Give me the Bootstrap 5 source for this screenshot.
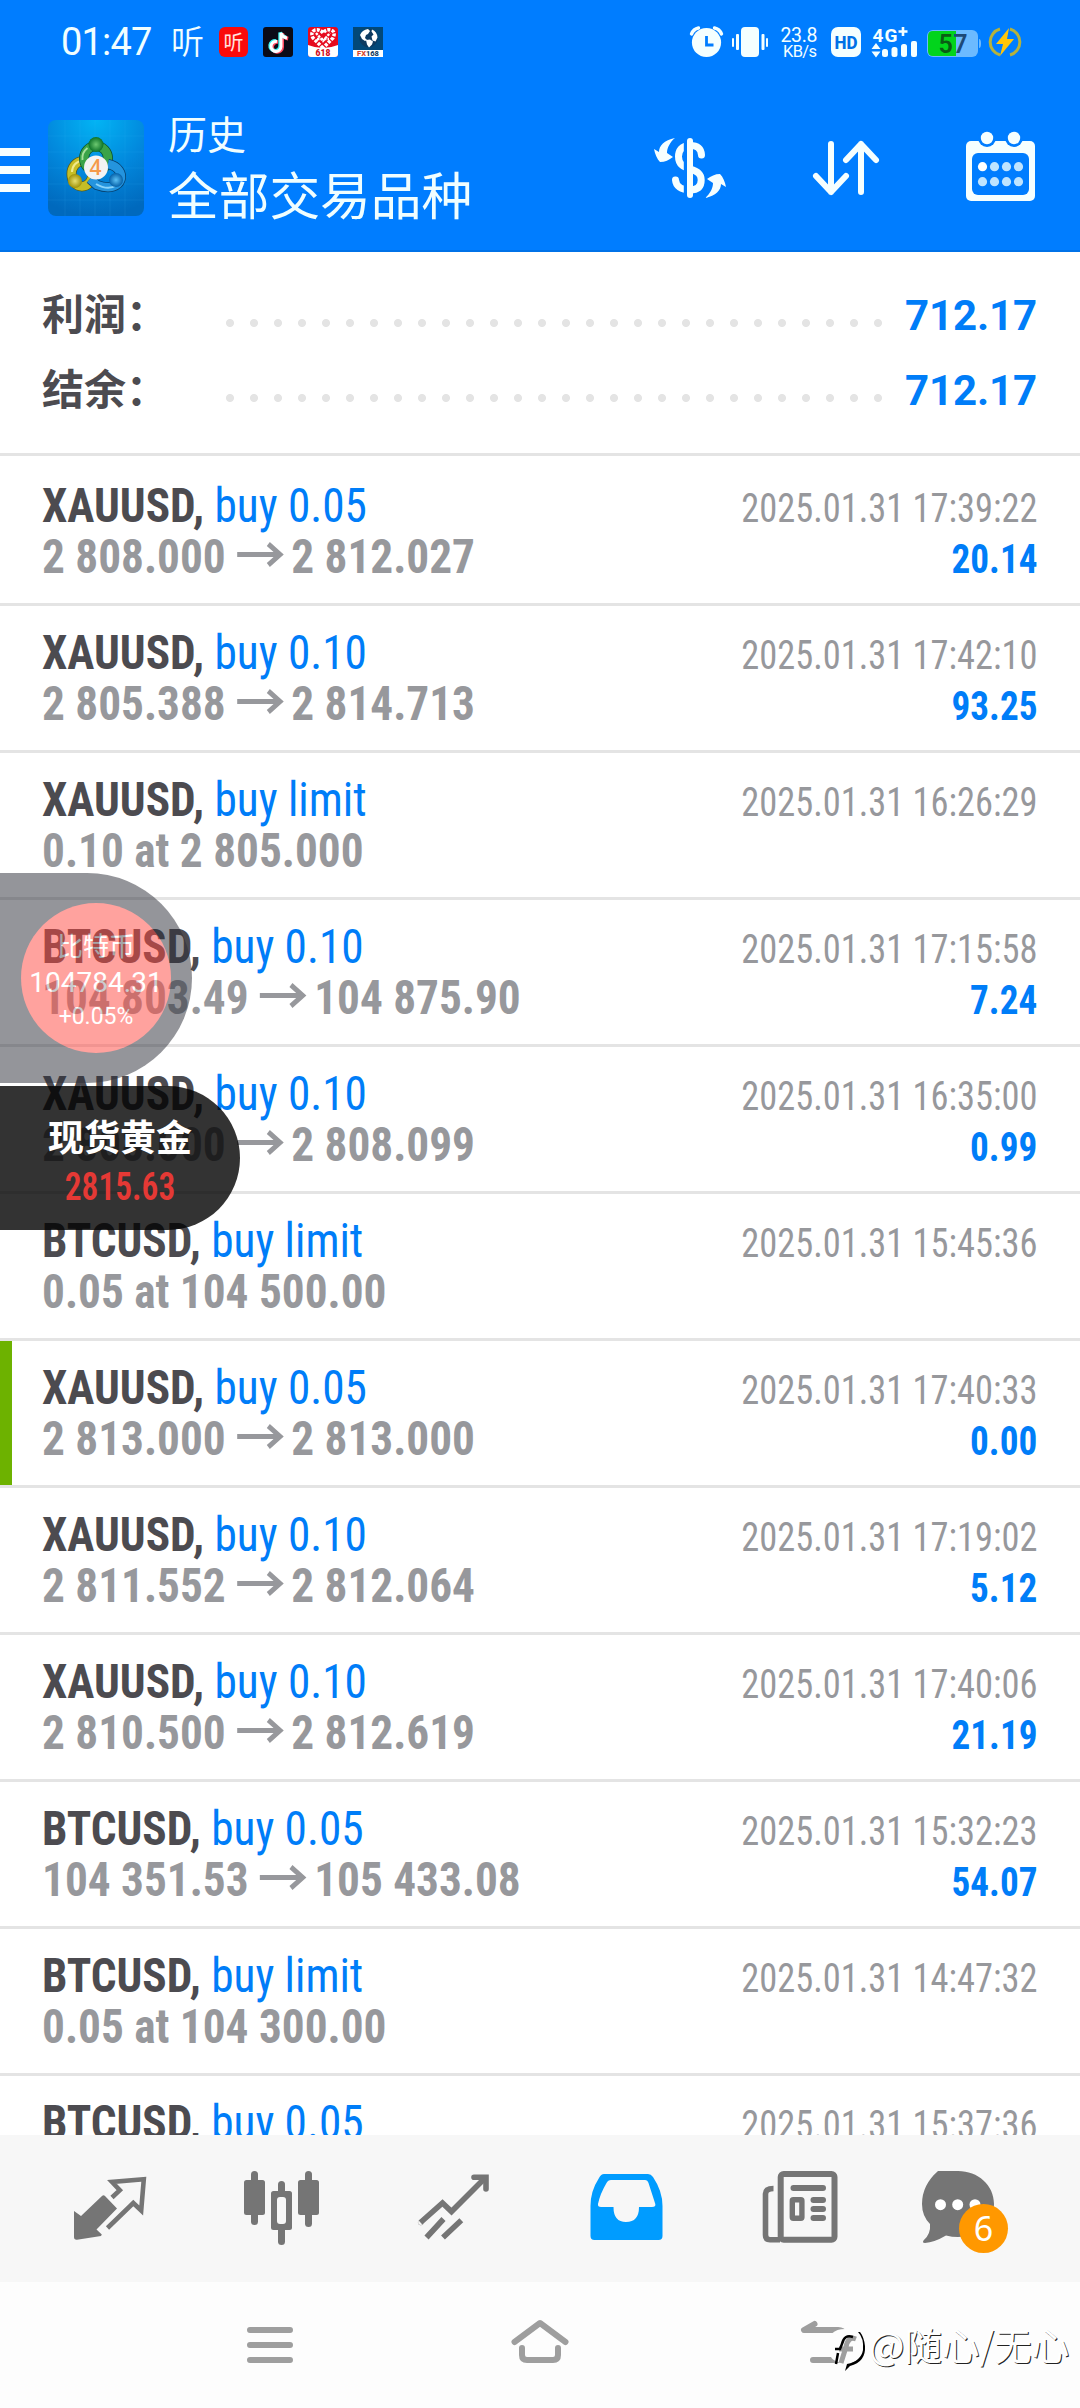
<!DOCTYPE html>
<html lang="zh-CN">
<head>
<meta charset="utf-8">
<meta name="viewport" content="width=device-width, initial-scale=1">
<title>历史</title>
<link href="https://cdn.jsdelivr.net/npm/bootstrap@5.3.0/dist/css/bootstrap.min.css" rel="stylesheet">
<style>
body{width:1080px;height:2408px;overflow:hidden;background:#fdfdfd;font-family:Roboto,"Noto Sans CJK SC",sans-serif}
svg{display:block;overflow:visible;flex:none}
.app-head{height:252px;background:#007dff;color:#f0feff;box-shadow:inset 0 -2px 0 #0072e8}
.status-row{height:84px;padding-left:61px;padding-right:60px}
.clock{font-size:38px;font-weight:450;line-height:84px;width:110px;letter-spacing:-.8px}
.ting{font:350 33px/80px "Noto Sans CJK SC",sans-serif;height:84px;width:48px}
.tool-row{height:168px}
.title-sm{font:400 39px/50px "Noto Sans CJK SC",sans-serif}
.title-lg{font:400 50.7px/60px "Noto Sans CJK SC",sans-serif;margin-top:6px}
.titles{margin-left:24px;padding-top:23px;width:482px}
.totals{height:201px;padding:26px 43px 0 42px;background:#fff}
.total-line{height:75px;line-height:75px}
.total-name{font:600 42px/68px "Noto Sans CJK SC",sans-serif;height:75px;color:#4c4b50;width:184px}
.dots{width:656px;height:8px;margin-top:14px;background:radial-gradient(circle at 4px 4px,#e4e4e4 3.6px,transparent 4.4px) 0 0/24px 8px repeat-x}
.total-sum{font-size:42px;font-weight:700;color:#007df8;letter-spacing:-.1px}
.deal{height:147px;padding:21px 43px 0 42px;border-top:3px solid #e4e4e4;background:#fff;position:relative;font-family:"Roboto Condensed",Roboto,sans-serif;font-stretch:75%}
.deal-first{height:150px;padding-top:24px}
.deal-mark::before{content:"";position:absolute;left:0;top:0;width:12px;bottom:0;background:#6db200}
.ln{height:51px;line-height:51px;white-space:nowrap}
.ln>:first-child{display:inline-block;transform:scaleX(.943);transform-origin:0 0}
.sym{font-size:48px;font-weight:700;color:#4c4b50}
.act{font-size:48px;font-weight:400;color:#007df8}
.px{font-size:48px;font-weight:700;color:#97989c}
.when{font-size:40px;color:#97989c;transform:scaleX(.91);transform-origin:100% 0}
.gain{font-size:40px;font-weight:700;color:#007df8;transform:scaleX(.93);transform-origin:100% 0}
.arr{display:inline-block;vertical-align:6px;margin:0 8.5px 0 12px}
.deals{height:1682px;overflow:hidden}
.tabs{height:147px;background:#f7f7f7;padding:23px 21px 0}
.tab{width:173px;display:flex;justify-content:center;position:relative}
.count{position:absolute;left:73px;top:46px;width:49px;height:49px;border-radius:50%;background:#ff9800;color:#fff;font:400 34px/48px "Noto Sans",sans-serif;text-align:center}
.sysnav{height:126px;padding:0 135px;background:#fdfdfd}
.sysnav>div{width:270px;padding-top:24px;display:flex;justify-content:center}
.float-btc{position:absolute;left:0;top:873px;width:192px;height:210px;border-radius:0 105px 105px 0;background:#2b2d37;opacity:.5;padding:30px 0 0 21px}
.coin{width:150px;height:150px;border-radius:50%;background:#ff4740;color:#fff;padding-top:27px;white-space:nowrap}
.coin div{display:flex;justify-content:center}
.c1{font:400 26px/30px "Noto Sans CJK SC",sans-serif}
.c2{font:400 28px/32px Roboto,sans-serif;margin-top:7px}
.c3{font:400 23px/26px Roboto,sans-serif;margin-top:5px}
.float-gold{position:absolute;left:0;top:1086px;width:240px;height:144px;border-radius:0 72px 72px 0;background:rgba(0,0,0,.8);text-align:center;padding-top:24px}
.g1{font:600 36px/50px "Noto Sans CJK SC",sans-serif;color:#fff}
.g2{font:600 38px/50px "Roboto Condensed",Roboto,sans-serif;font-stretch:75%;color:#e53935;transform:scaleX(.88);margin-top:2px}
.wmark{position:absolute;left:827px;top:2322px;height:50px}
.wtext{font:400 37.5px/44px "Noto Sans CJK SC",sans-serif;color:#fff;text-shadow:1px 1px 0 #222;white-space:nowrap;margin-left:4px}
</style>
</head>
<body>
<header class="app-head">
  <div class="status-row d-flex align-items-center">
    <div class="clock">01:47</div>
    <div class="ting">听</div>
    <svg width="134" height="30" viewBox="219 27 134 30">
      <rect x="219" y="27" width="29" height="30" rx="6" fill="#fa0a0a"/>
      <text x="223.500" y="49.500" font-size="20" font-family="Noto Sans CJK SC" fill="#ffe4e0">听</text>
      <rect x="263" y="27" width="30" height="30" rx="3" fill="#0b0b17"/>
      <g fill="none" stroke-width="3.6"><path d="M277.400 41.500a5 5 0 1 0 4 5V33c1 3 3 4.500 6 5" stroke="#ff4b63" transform="translate(.8 .6)"/><path d="M277 41.500a5 5 0 1 0 4 5V33c1 3 3 4.500 6 5" stroke="#3df0ee" transform="translate(-.9 -.6)"/><path d="M277 41.500a5 5 0 1 0 4 5V33c1 3 3 4.500 6 5" stroke="#fff" stroke-width="3"/></g>
      <rect x="308" y="27" width="30" height="30" rx="3" fill="#e60a1e"/>
      <path d="M308 45q15 6 30 0V54q0 3-3 3H311q-3 0-3-3z" fill="#fff"/>
      <path d="M323 48L313 38q-3-6 2-8 5-1 8 3 3-4 8-3 5 2 2 8z" fill="#e60a1e" stroke="#fff" stroke-width="3.500" stroke-dasharray="3 1.200"/>
      <path d="M316 33l7 8 7-8M317 39h12" stroke="#fff" stroke-width="2.400" fill="none" stroke-dasharray="2.500 1"/>
      <text x="323" y="56" font-size="8.500" font-weight="900" font-family="Roboto" text-anchor="middle" fill="#d00c1c">618</text>
      <rect x="353" y="27" width="30" height="30" fill="#024878"/>
      <circle cx="368.500" cy="38" r="9.200" fill="#0d3a60"/>
      <path d="M360 35q2-5 8-6l2 2-2 3-2 1-1 3 2 2-2 1-3-2zM372 29.500q5 2 5.500 8l-2 4-3-1-1-4 2-2-2-3zM366 40l4-.500 3 2-1 3-3 3-2-3z" fill="#fff"/>
      <rect x="353" y="50" width="30" height="7" fill="#fff"/>
      <text x="368" y="56.300" font-size="7.500" font-weight="800" font-family="Roboto" text-anchor="middle" fill="#123d66"><tspan fill="#d6432c">FX</tspan>168</text>
    </svg>
    <svg class="ms-auto" width="330" height="34" viewBox="690 25 330 34">
      <g fill="#f4ffff">
        <circle cx="706.500" cy="42.500" r="14.600"/>
        <path d="M691.500 34q2-5 7-6M721.500 34q-2-5-7-6" fill="none" stroke="#f4ffff" stroke-width="3.400" stroke-linecap="round"/>
        <path d="M706.500 36v9h7" fill="none" stroke="#007dff" stroke-width="2.800"/>
        <rect x="741" y="27" width="18" height="30" rx="4"/>
        <rect x="736" y="34" width="3" height="16" rx="1"/><rect x="732" y="38" width="2" height="9" rx="1"/>
        <rect x="761.500" y="34" width="3" height="16" rx="1"/><rect x="766" y="38" width="2" height="9" rx="1"/>
        <text x="799" y="41.500" font-size="19.500" font-weight="450" font-family="Roboto" text-anchor="middle" textLength="37">23.8</text>
        <text x="800" y="56.800" font-size="16.500" font-weight="450" font-family="Roboto" text-anchor="middle" textLength="34">KB/s</text>
        <rect x="831" y="27" width="30" height="30" rx="7"/>
        <text x="846" y="49" font-size="19" font-weight="800" font-family="Roboto" text-anchor="middle" textLength="23" lengthAdjust="spacingAndGlyphs" fill="#0070e6">HD</text>
        <text x="872.500" y="41.500" font-size="19" font-weight="700" font-family="Roboto" textLength="25">4G</text>
        <path d="M898.500 31.500h9M903 27v9" stroke="#f4ffff" stroke-width="2.600"/>
        <path d="M871.500 49l4.500-6 4.500 6zM871.500 51.500l4.500 6 4.500-6z"/>
        <rect x="882" y="49" width="6" height="8" rx="2.500"/><rect x="891.500" y="47" width="6" height="10" rx="2.500"/><rect x="901" y="44" width="6" height="13" rx="2.500"/><rect x="911" y="41" width="6" height="16" rx="2"/>
      </g>
      <rect x="927" y="30" width="51" height="27" rx="6" fill="#6cbaff"/>
      <path d="M979 39q2 0 2 4.500t-2 4.500z" fill="#6cbaff"/>
      <path d="M933 31H956V56H933q-5 0-5-5V36q0-5 5-5z" fill="#02d41c"/>
      <text x="938.500" y="52.500" font-size="25" font-weight="600" font-family="Roboto" textLength="29"><tspan fill="#0a5c14">5</tspan><tspan fill="#1d4a78">7</tspan></text>
      <path d="M1000 29A13.500 13.500 0 0 0 1000 55M1010 29A13.500 13.500 0 0 1 1010 55" fill="none" stroke="#b5b23c" stroke-width="3"/>
      <path d="M1009 28L996 44h7l-3 12 14-17h-7z" fill="#ffc60a"/>
    </svg>
  </div>
  <div class="tool-row d-flex">
    <svg width="48" height="168" viewBox="0 84 48 168"><path d="M0 148h30v8H0zM0 166h30v8H0zM0 184h30v8H0z" fill="#f8ffff"/></svg>
    <svg width="96" height="168" viewBox="48 84 96 168">
      <defs>
        <radialGradient id="bg" cx=".5" cy="0" r="1"><stop offset="0" stop-color="#02b4f4"/><stop offset=".55" stop-color="#0287dc"/><stop offset="1" stop-color="#0069bd"/></radialGradient>
        <radialGradient id="hg"><stop offset="0" stop-color="#6cc870"/><stop offset="1" stop-color="#0c7228"/></radialGradient>
        <radialGradient id="hy"><stop offset="0" stop-color="#e8e070"/><stop offset="1" stop-color="#a09208"/></radialGradient>
        <radialGradient id="hb"><stop offset="0" stop-color="#5cc0f4"/><stop offset="1" stop-color="#0560a8"/></radialGradient>
      </defs>
      <rect x="48" y="120" width="96" height="96" rx="8" fill="url(#bg)"/>
      <path d="M65 120v96M80 120v96M95 120v96M110 120v96M125 120v96M48 136h96M48 152h96M48 168h96M48 184h96M48 200h96" stroke="#4cc0f4" stroke-opacity=".12"/>
      <g fill="none">
        <ellipse cx="82" cy="174" rx="10.500" ry="12.500" stroke="#5c5c18" stroke-width="10"/><ellipse cx="82" cy="174" rx="10.500" ry="12.500" stroke="#c6be26" stroke-width="8.500"/><path d="M72 172a10 11 0 0 1 10-11" stroke="#f0ea8c" stroke-width="2"/>
        <ellipse cx="96" cy="158.500" rx="12" ry="12.500" stroke="#0a5230" stroke-width="10"/><ellipse cx="96" cy="158.500" rx="12" ry="12.500" stroke="#3aa348" stroke-width="8.500"/><path d="M82.500 160a13 13 0 0 1 5-12" stroke="#a6e09c" stroke-width="2"/>
        <path d="M108 164C129 168 124 195 97 185L90 179" stroke="#06406e" stroke-width="10"/><path d="M108 164C129 168 124 195 97 185L90 179" stroke="#2494de" stroke-width="8.500"/><path d="M96 184Q108 191 117 185" stroke="#8ad4fa" stroke-width="2"/>
      </g>
      <circle cx="96" cy="144.500" r="7.500" fill="url(#hg)"/><circle cx="75" cy="181" r="7" fill="url(#hy)"/><circle cx="116" cy="180" r="7" fill="url(#hb)"/>
      <circle cx="96" cy="167.500" r="12" fill="#f3f3f3"/>
      <text x="95.500" y="175" font-size="21" font-weight="600" font-family="Open Sans" text-anchor="middle" fill="#f59a4a">4</text>
    </svg>
    <div class="titles">
      <div class="title-sm">历史</div>
      <div class="title-lg">全部交易品种</div>
    </div>
    <svg width="72" height="168" viewBox="650 84 72 168" fill="#f6ffff">
      <path d="M701.500 155C701 147 696 145.500 690 145.500 681 145.500 678.500 151 678.500 156.500 678.500 165 684 167 690 169 698 171.500 701.200 174 701.200 180 701.200 187 697 190 690 190 681 190 676 186 675.500 180" fill="none" stroke="#f6ffff" stroke-width="7" stroke-linecap="round"/>
      <path d="M683.800 138h3.200v60h-3.200z" fill="#007dff"/><rect x="687" y="138" width="6" height="60" rx="3"/>
      <path id="sw" d="M675 138C664 140 659 146 659 152L654 149C655 154 657 159 660 162 665 162 669 160 673 157L667 153C667 148 670 142 675 138Z"/>
      <use href="#sw" transform="rotate(180 690 168)"/>
    </svg>
    <svg width="156" height="168" viewBox="722 84 156 168" fill="none" stroke="#f6ffff" stroke-width="6" stroke-linecap="round" stroke-linejoin="round">
      <path d="M831 144v48M816 176l15 16 15-16M861 192v-48M846 160l15-16 15 16"/>
    </svg>
    <svg width="202" height="168" viewBox="878 84 202 168">
      <rect x="966" y="141" width="69" height="60" rx="5" fill="#f6ffff"/><rect x="972" y="153" width="57" height="42" rx="6" fill="#007dff"/>
      <circle cx="987" cy="138" r="9" fill="#007dff"/><circle cx="1014" cy="138" r="9" fill="#007dff"/>
      <circle cx="987" cy="138" r="6.200" fill="#f6ffff"/><circle cx="1014" cy="138" r="6.200" fill="#f6ffff"/>
      <g fill="#bfe4ff"><circle cx="982.500" cy="166.700" r="4.600" fill="#fff"/><circle cx="994.500" cy="166.700" r="4.600"/><circle cx="1006.500" cy="166.700" r="4.600"/><circle cx="1018.500" cy="166.700" r="4.600"/><circle cx="982.500" cy="181.700" r="4.600"/><circle cx="994.500" cy="181.700" r="4.600"/><circle cx="1006.500" cy="181.700" r="4.600"/><circle cx="1018.500" cy="181.700" r="4.600"/></g>
    </svg>
  </div>
</header>

<section class="totals">
  <div class="total-line d-flex align-items-center"><div class="total-name">利润：</div><div class="dots"></div><div class="total-sum ms-auto">712.17</div></div>
  <div class="total-line d-flex align-items-center"><div class="total-name">结余：</div><div class="dots"></div><div class="total-sum ms-auto">712.17</div></div>
</section>

<svg width="0" height="0" class="position-absolute"><defs><g id="arrow"><path d="M0 12.500h46M33 2l12.500 10.500L33 23" fill="none" stroke="#97989c" stroke-width="5"/></g></defs></svg>

<main class="deals">
  <div class="deal deal-first">
    <div class="ln d-flex justify-content-between align-items-baseline"><div><span class="sym">XAUUSD, </span><span class="act">buy 0.05</span></div><span class="when">2025.01.31 17:39:22</span></div>
    <div class="ln d-flex justify-content-between align-items-baseline"><div class="px"><span>2 808.000</span><svg class="arr" width="49" height="25"><use href="#arrow"/></svg><span>2 812.027</span></div><span class="gain">20.14</span></div>
  </div>
  <div class="deal">
    <div class="ln d-flex justify-content-between align-items-baseline"><div><span class="sym">XAUUSD, </span><span class="act">buy 0.10</span></div><span class="when">2025.01.31 17:42:10</span></div>
    <div class="ln d-flex justify-content-between align-items-baseline"><div class="px"><span>2 805.388</span><svg class="arr" width="49" height="25"><use href="#arrow"/></svg><span>2 814.713</span></div><span class="gain">93.25</span></div>
  </div>
  <div class="deal">
    <div class="ln d-flex justify-content-between align-items-baseline"><div><span class="sym">XAUUSD, </span><span class="act">buy limit</span></div><span class="when">2025.01.31 16:26:29</span></div>
    <div class="ln"><span class="px">0.10 at 2 805.000</span></div>
  </div>
  <div class="deal">
    <div class="ln d-flex justify-content-between align-items-baseline"><div><span class="sym">BTCUSD, </span><span class="act">buy 0.10</span></div><span class="when">2025.01.31 17:15:58</span></div>
    <div class="ln d-flex justify-content-between align-items-baseline"><div class="px"><span>104 803.49</span><svg class="arr" width="49" height="25"><use href="#arrow"/></svg><span>104 875.90</span></div><span class="gain">7.24</span></div>
  </div>
  <div class="deal">
    <div class="ln d-flex justify-content-between align-items-baseline"><div><span class="sym">XAUUSD, </span><span class="act">buy 0.10</span></div><span class="when">2025.01.31 16:35:00</span></div>
    <div class="ln d-flex justify-content-between align-items-baseline"><div class="px"><span>2 808.000</span><svg class="arr" width="49" height="25"><use href="#arrow"/></svg><span>2 808.099</span></div><span class="gain">0.99</span></div>
  </div>
  <div class="deal">
    <div class="ln d-flex justify-content-between align-items-baseline"><div><span class="sym">BTCUSD, </span><span class="act">buy limit</span></div><span class="when">2025.01.31 15:45:36</span></div>
    <div class="ln"><span class="px">0.05 at 104 500.00</span></div>
  </div>
  <div class="deal deal-mark">
    <div class="ln d-flex justify-content-between align-items-baseline"><div><span class="sym">XAUUSD, </span><span class="act">buy 0.05</span></div><span class="when">2025.01.31 17:40:33</span></div>
    <div class="ln d-flex justify-content-between align-items-baseline"><div class="px"><span>2 813.000</span><svg class="arr" width="49" height="25"><use href="#arrow"/></svg><span>2 813.000</span></div><span class="gain">0.00</span></div>
  </div>
  <div class="deal">
    <div class="ln d-flex justify-content-between align-items-baseline"><div><span class="sym">XAUUSD, </span><span class="act">buy 0.10</span></div><span class="when">2025.01.31 17:19:02</span></div>
    <div class="ln d-flex justify-content-between align-items-baseline"><div class="px"><span>2 811.552</span><svg class="arr" width="49" height="25"><use href="#arrow"/></svg><span>2 812.064</span></div><span class="gain">5.12</span></div>
  </div>
  <div class="deal">
    <div class="ln d-flex justify-content-between align-items-baseline"><div><span class="sym">XAUUSD, </span><span class="act">buy 0.10</span></div><span class="when">2025.01.31 17:40:06</span></div>
    <div class="ln d-flex justify-content-between align-items-baseline"><div class="px"><span>2 810.500</span><svg class="arr" width="49" height="25"><use href="#arrow"/></svg><span>2 812.619</span></div><span class="gain">21.19</span></div>
  </div>
  <div class="deal">
    <div class="ln d-flex justify-content-between align-items-baseline"><div><span class="sym">BTCUSD, </span><span class="act">buy 0.05</span></div><span class="when">2025.01.31 15:32:23</span></div>
    <div class="ln d-flex justify-content-between align-items-baseline"><div class="px"><span>104 351.53</span><svg class="arr" width="49" height="25"><use href="#arrow"/></svg><span>105 433.08</span></div><span class="gain">54.07</span></div>
  </div>
  <div class="deal">
    <div class="ln d-flex justify-content-between align-items-baseline"><div><span class="sym">BTCUSD, </span><span class="act">buy limit</span></div><span class="when">2025.01.31 14:47:32</span></div>
    <div class="ln"><span class="px">0.05 at 104 300.00</span></div>
  </div>
  <div class="deal">
    <div class="ln d-flex justify-content-between align-items-baseline"><div><span class="sym">BTCUSD, </span><span class="act">buy 0.05</span></div><span class="when">2025.01.31 15:37:36</span></div>
  </div>
</main>

<nav class="tabs d-flex">
  <div class="tab"><svg width="101" height="101" viewBox="57 2158 101 101">
    <path d="M74 2211L81 2216 102 2196Q103.500 2194.500 105 2196L117 2208.500 96.500 2229.500 101.800 2234.500 101 2236 77 2239.700Q74 2240 74 2237Z" fill="#757575"/>
    <path d="M112 2197.500L119.800 2190.200 112 2182 143.800 2179.300 141.200 2210.500 133.300 2203 107.500 2228" fill="none" stroke="#757575" stroke-width="4.600"/></svg></div>
  <div class="tab"><svg width="101" height="101" viewBox="230 2158 101 101" fill="#757575">
    <rect x="244" y="2180" width="21" height="35" rx="2.500"/><rect x="251" y="2171" width="7" height="54" rx="3.500"/>
    <rect x="271" y="2191" width="21" height="39" rx="2.500"/><rect x="278" y="2181" width="7" height="64" rx="3.500"/><rect x="277" y="2197" width="9" height="27" rx="3" fill="#f7f7f7"/>
    <rect x="298" y="2180" width="21" height="35" rx="2.500"/><rect x="305" y="2171" width="7" height="56" rx="3.500"/></svg></div>
  <div class="tab"><svg width="101" height="101" viewBox="403 2158 101 101" fill="none" stroke="#757575" stroke-width="5.600">
    <path d="M420.500 2222.500L442.500 2203 451.500 2211.500 486 2177"/><path d="M474 2177.200H486V2189" stroke-linecap="round"/><circle cx="420.800" cy="2222.300" r=".1" stroke-linecap="round"/>
    <path d="M443.500 2219L426.500 2237.500M461.300 2220.200L443 2237.500"/></svg></div>
  <div class="tab"><svg width="101" height="101" viewBox="576 2158 101 101">
    <path fill-rule="evenodd" fill="#009cff" d="M604 2174H648Q651 2174 653 2177 662.500 2191 662.500 2206V2236Q662.500 2240 658.500 2240H594.500Q590.500 2240 590.500 2236V2206Q590.500 2191 599 2178 601 2174 604 2174ZM611 2180Q608 2180 606.500 2183 600 2194 598 2204 597.500 2207 601 2207H613.500Q613.500 2222 626 2222 639 2222 639 2207H652Q656 2207 655.300 2204L648.500 2183Q647.500 2180 645 2180Z"/></svg></div>
  <div class="tab"><svg width="101" height="101" viewBox="749 2158 101 101" fill="none" stroke="#757575" stroke-width="6">
    <rect x="780.700" y="2174" width="53.800" height="65.700" rx="3"/><path d="M773.500 2188.500Q765.500 2188.500 765.500 2194V2235Q765.500 2239.700 770 2239.700H780" stroke-width="5.600"/>
    <path d="M793.500 2188H823M813.500 2200H823M813.500 2209H823M813.500 2218H823" stroke-linecap="round"/><rect x="792.300" y="2199.800" width="9.600" height="18.500" rx="1" stroke-width="5.400"/></svg></div>
  <div class="tab"><svg width="101" height="101" viewBox="922 2158 101 101">
    <path d="M958 2171C978 2171 994 2185 994 2204 994 2223 978 2237 958 2237Q952 2237 946 2235.500 934 2242.500 925 2243 922 2243 923.500 2240.500 931 2234 930 2224 922 2216 922 2204 922 2185 938 2171 958 2171Z" fill="#757575"/>
    <g fill="#fff"><circle cx="940.500" cy="2204.700" r="5.500"/><circle cx="957.700" cy="2204.700" r="5.500"/><circle cx="975" cy="2204.700" r="5.500"/></g></svg><span class="count">6</span></div>
</nav>

<nav class="sysnav d-flex">
  <div><svg width="60" height="60" viewBox="240 2306 60 60" stroke="#9e9e9e" stroke-width="6" stroke-linecap="round"><path d="M250 2330h40M250 2345h40M250 2360h40"/></svg></div>
  <div><svg width="60" height="60" viewBox="510 2306 60 60" fill="none" stroke="#9e9e9e" stroke-width="6" stroke-linecap="round" stroke-linejoin="round"><path d="M514.500 2342L540 2323 565.500 2342M522 2348V2355Q522 2360 527 2360H553Q558 2360 558 2355V2348"/></svg></div>
  <div><svg width="60" height="60" viewBox="780 2306 60 60" fill="none" stroke="#9e9e9e" stroke-width="6" stroke-linecap="round"><path d="M814.500 2324L804 2330H838Q848 2331 848 2345 848 2360 838 2360H813" stroke-linejoin="round"/></svg></div>
</nav>

<aside class="float-btc"><div class="coin"><div class="c1">比特币</div><div class="c2">104784.31</div><div class="c3">+0.05%</div></div></aside>
<aside class="float-gold"><div class="g1">现货黄金</div><div class="g2">2815.63</div></aside>
<div class="wmark d-flex">
  <svg width="38" height="50" viewBox="827 2322 38 50">
    <path d="M858 2332Q864 2338 863 2350 861 2361 847 2364L845 2371 850 2366Q866 2362 865 2346 864 2337 860 2332Z" fill="#000"/>
    <path d="M845 2329Q862 2329 862 2346 862 2363 845 2363 828 2363 828 2346 828 2329 845 2329Z" fill="#fdfdfd"/>
    <path d="M853 2338Q845 2335 843 2346L838 2362M836 2348H850" fill="none" stroke="#9e9e9e" stroke-width="5" transform="translate(3 1)"/>
    <path d="M853 2337Q844 2334 842 2344L840 2349H835M838 2353L836 2364" fill="none" stroke="#000" stroke-width="2.500"/>
  </svg>
  <div class="wtext">@随心/无心</div>
</div>
<script src="https://cdn.jsdelivr.net/npm/bootstrap@5.3.0/dist/js/bootstrap.bundle.min.js"></script>
</body>
</html>
